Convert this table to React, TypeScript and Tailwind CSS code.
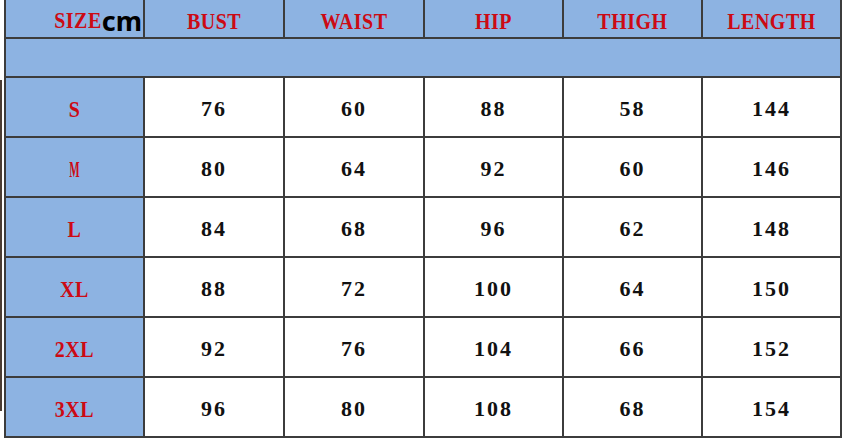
import React from "react";

const sizes = [
  { label: "S", values: ["76", "60", "88", "58", "144"] },
  { label: "M", values: ["80", "64", "92", "60", "146"] },
  { label: "L", values: ["84", "68", "96", "62", "148"] },
  { label: "XL", values: ["88", "72", "100", "64", "150"] },
  { label: "2XL", values: ["92", "76", "104", "66", "152"] },
  { label: "3XL", values: ["96", "80", "108", "68", "154"] },
];

const headers = ["BUST", "WAIST", "HIP", "THIGH", "LENGTH"];

const red = "inline-block scale-y-[1.15] text-[#cc0a14] font-['Liberation_Serif',serif] font-bold text-[20px] tracking-[0.5px] leading-none";
const num = "text-[#111] font-['Liberation_Serif',serif] font-bold text-[22px] tracking-[2px] leading-none";
const cell = "border-r-2 border-b-2 border-[#3c3c3c] flex items-center justify-center";

export default function App() {
  return (
    <div className="w-[842px] h-[440px] bg-white flex overflow-hidden">
      {/* leftover edge of the picture beside the chart */}
      <div className="w-[4px] flex flex-col">
        <div className="h-[80px]" />
        <div className="w-[2px] h-[331px] bg-[#4b3d34]" />
      </div>

      <div className="border-l-2 border-[#3c3c3c] h-[438px] grid grid-cols-[139px_140px_140px_139px_139px_139px] grid-rows-[39px_39px_60px_60px_60px_60px_60px_60px]">
        <div className={`${cell} bg-[#8db3e2] !justify-end items-end pr-[1px] pb-[3px]`}>
          <span className={`${red} mb-[4px]`}>SIZE</span>
          <span className="text-black font-['Noto_Sans',sans-serif] font-bold text-[27px] leading-none">cm</span>
        </div>
        {headers.map((h) => (
          <div key={h} className={`${cell} bg-[#8db3e2] pt-[4px]`}>
            <span className={red}>{h}</span>
          </div>
        ))}

        <div className={`${cell} col-span-6 bg-[#8db3e2]`} />

        {sizes.map((row) => (
          <React.Fragment key={row.label}>
            <div className={`${cell} bg-[#8db3e2] pt-[4px]`}>
              {row.label === "M" ? (
                <span className={`${red} scale-x-[0.55]`}>M</span>
              ) : (
                <span className={red}>{row.label}</span>
              )}
            </div>
            {row.values.map((v, i) => (
              <div key={i} className={`${cell} bg-white pt-[3px]`}>
                <span className={num}>{v}</span>
              </div>
            ))}
          </React.Fragment>
        ))}
      </div>
    </div>
  );
}
